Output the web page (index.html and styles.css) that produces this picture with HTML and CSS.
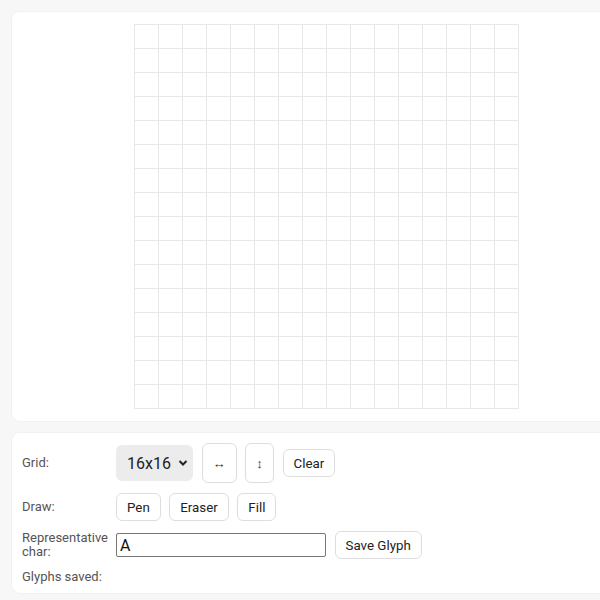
FILE: index.html
```html
<!DOCTYPE html>
<html>
<head>
<meta charset="utf-8">
<link rel="stylesheet" href="styles.css">
</head>
<body>
<div class="app">
  <div class="card canvas-card">
    <div class="grid"></div>
  </div>
  <div class="card controls">
    <div class="row">
      <div class="label">Grid:</div>
      <div class="items">
        <div class="select">16x16 <svg class="chev" width="10" height="8" viewBox="0 0 10 8"><path d="M1.5 2 L5 5.5 L8.5 2" fill="none" stroke="#222" stroke-width="2"/></svg></div>
        <button class="btn tall">↔</button>
        <button class="btn tall narrow">↕</button>
        <button class="btn">Clear</button>
      </div>
    </div>
    <div class="row">
      <div class="label">Draw:</div>
      <div class="items">
        <button class="btn">Pen</button>
        <button class="btn">Eraser</button>
        <button class="btn">Fill</button>
      </div>
    </div>
    <div class="row">
      <div class="label">Representative char:</div>
      <div class="items">
        <input class="char" type="text" value="A">
        <button class="btn">Save Glyph</button>
      </div>
    </div>
    <div class="row short">
      <div class="label">Glyphs saved:</div>
      <div class="items"></div>
    </div>
  </div>
</div>
</body>
</html>
```
FILE: styles.css
```css
html, body {
  margin: 0;
  padding: 0;
  overflow: hidden;
  background: #f7f7f7;
  font-family: Roboto, "Liberation Sans", sans-serif;
}
.app {
  padding: 12px;
  width: 628px;
  display: flex;
  flex-direction: column;
  gap: 12px;
}
.card {
  background: #fff;
  border-radius: 8px;
  box-shadow: 0 0 0 1px #f1f1f1;
}
.canvas-card {
  padding: 12px;
  display: flex;
  justify-content: center;
}
.grid {
  width: 384px;
  height: 384px;
  border-right: 1px solid #e8e8e8;
  border-bottom: 1px solid #e8e8e8;
  background-image:
    linear-gradient(to right, #e8e8e8 1px, transparent 1px),
    linear-gradient(to bottom, #e8e8e8 1px, transparent 1px);
  background-size: 24px 24px;
}
.controls {
  padding: 10px 10px 8px;
  display: flex;
  flex-direction: column;
  gap: 10px;
}
.row {
  display: flex;
  align-items: center;
  gap: 8px;
}
.label {
  width: 86px;
  font-size: 13px;
  line-height: 14px;
  color: #555;
}
.items {
  display: flex;
  align-items: center;
  gap: 8.5px;
}
.select {
  box-sizing: border-box;
  height: 36px;
  width: 77px;
  padding: 0 5px 0 11px;
  background: #ececec;
  border-radius: 6px;
  display: flex;
  align-items: center;
  justify-content: space-between;
  font-size: 16px;
  color: #222;
}
.btn {
  box-sizing: border-box;
  height: 28px;
  padding: 0 10px;
  background: #fff;
  border: 1px solid #dedede;
  border-radius: 6px;
  font-family: Roboto, "Liberation Sans", sans-serif;
  font-size: 13.333px;
  color: #222;
  margin: 0;
}
.btn.tall {
  height: 40px;
  width: 35px;
  padding: 0;
  font-size: 13px;
  color: #333;
}
.btn.tall.narrow {
  width: 29px;
}
.char {
  box-sizing: border-box;
  width: 210px;
  height: 24px;
  border: 1px solid #767676;
  border-radius: 2px;
  padding: 0 3px;
  font-family: Roboto, "Liberation Sans", sans-serif;
  font-size: 16px;
  color: #111;
  margin: 0;
}
.row.short .items {
  height: 16px;
}
```
